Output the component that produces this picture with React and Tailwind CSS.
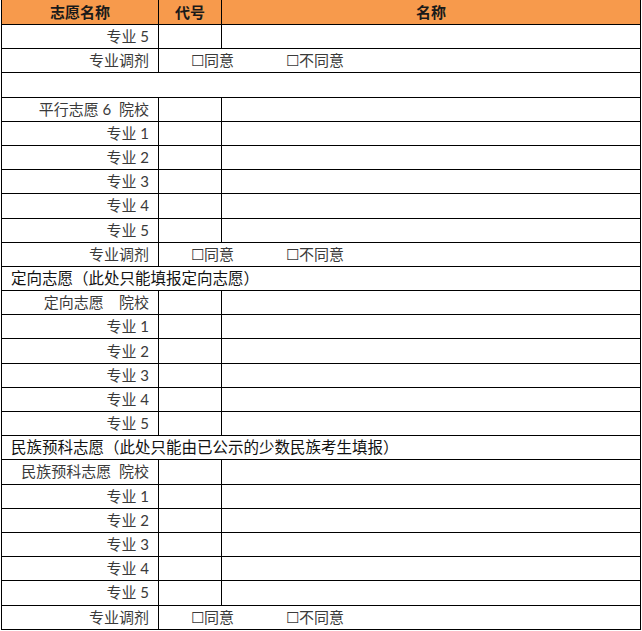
import React from "react";

const font = { fontFamily: 'Lato, "Noto Sans CJK SC", sans-serif' };

function Row({ children, className = "" }) {
  return (
    <div className={"flex h-[24.2px] border-b border-black " + className}>
      {children}
    </div>
  );
}

function Item({ label }) {
  return (
    <Row>
      <div className="w-[157px] border-r border-black flex items-center justify-end pr-[9px] text-[#3a3a3a] whitespace-pre">
        {label}
      </div>
      <div className="w-[63px] border-r border-black"></div>
      <div className="flex-1"></div>
    </Row>
  );
}

function Adjust() {
  return (
    <Row>
      <div className="w-[157px] border-r border-black flex items-center justify-end pr-[9px] text-[#3a3a3a]">
        专业调剂
      </div>
      <div className="flex-1 flex items-center pl-[32px] text-[#3a3a3a]">
        <span className="inline-block w-[95px]">☐同意</span>
        <span>☐不同意</span>
      </div>
    </Row>
  );
}

function Section({ text }) {
  return (
    <Row>
      <div className="flex-1 flex items-center pl-[9px] text-[#111] text-[15.5px]">{text}</div>
    </Row>
  );
}

export default function App() {
  return (
    <div className="bg-white w-[642px] h-[631px]" style={font}>
      <div className="ml-px w-[640px] border-l border-r border-black text-[15px] leading-none">
        <div className="flex h-[25px] border-b border-black bg-[#f79a4c] font-bold text-[#1a1a1a]">
          <div className="w-[157px] border-r border-black flex items-center justify-center">志愿名称</div>
          <div className="w-[63px] border-r border-black flex items-center justify-center">代号</div>
          <div className="flex-1 flex items-center justify-center">名称</div>
        </div>
        <Item label="专业 5" />
        <Adjust />
        <Row><div className="flex-1"></div></Row>
        <Item label="平行志愿 6  院校" />
        <Item label="专业 1" />
        <Item label="专业 2" />
        <Item label="专业 3" />
        <Item label="专业 4" />
        <Item label="专业 5" />
        <Adjust />
        <Section text="定向志愿（此处只能填报定向志愿）" />
        <Item label="定向志愿    院校" />
        <Item label="专业 1" />
        <Item label="专业 2" />
        <Item label="专业 3" />
        <Item label="专业 4" />
        <Item label="专业 5" />
        <Section text="民族预科志愿（此处只能由已公示的少数民族考生填报）" />
        <Item label="民族预科志愿  院校" />
        <Item label="专业 1" />
        <Item label="专业 2" />
        <Item label="专业 3" />
        <Item label="专业 4" />
        <Item label="专业 5" />
        <Adjust />
      </div>
    </div>
  );
}
